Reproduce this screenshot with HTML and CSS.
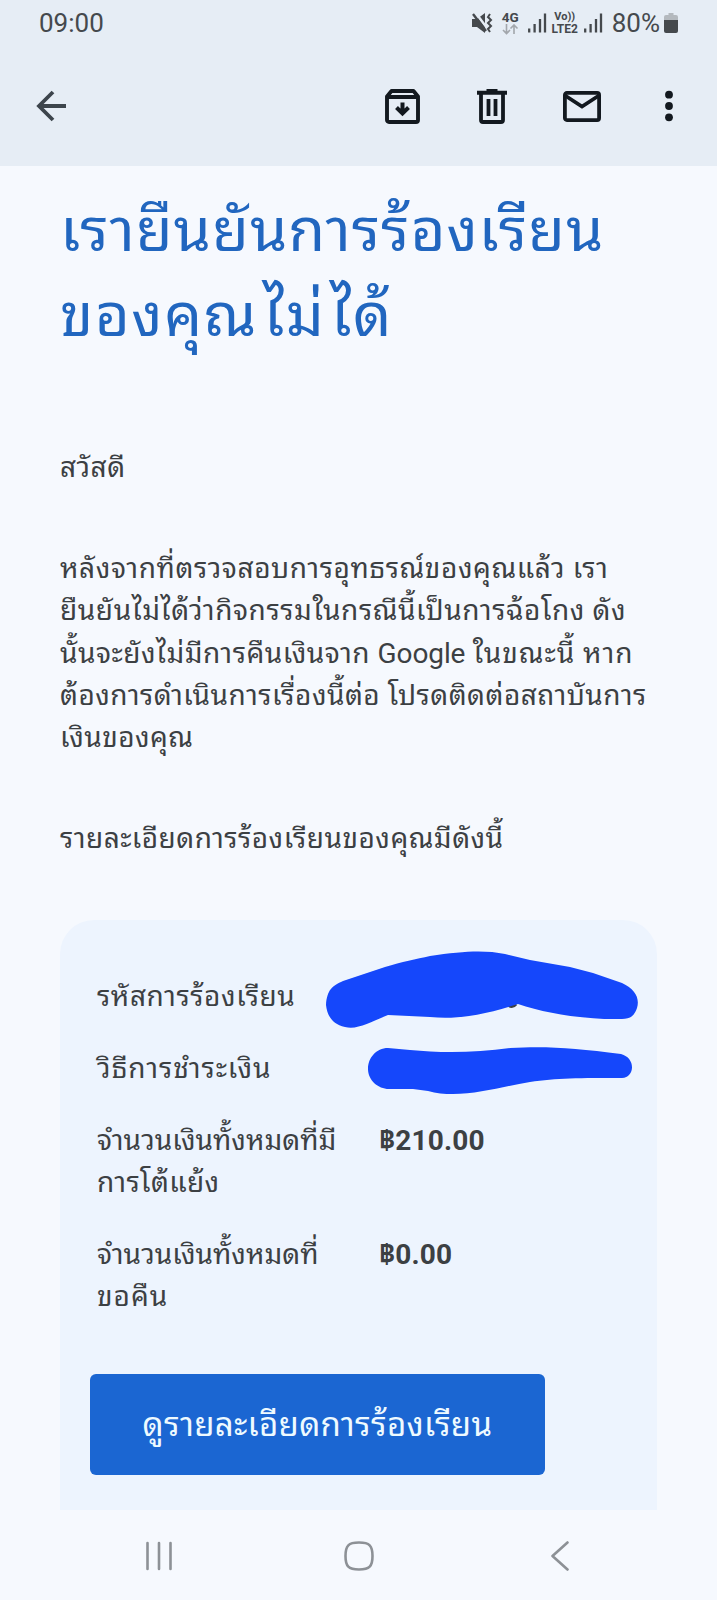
FILE: index.html
```html
<!DOCTYPE html>
<html lang="th">
<head>
<meta charset="utf-8">
<title>Gmail</title>
<link rel="stylesheet" href="styles.css">
</head>
<body>
<header class="top">
  <div class="status">
    <span class="clock">09:00</span>
    <div class="indicators">
      <svg class="mute" width="22" height="22" viewBox="0 0 22 22"><path d="M1 7h5l8-6v20l-8-6H1z" fill="#45494d"/><path d="M4 0l12 16" stroke="#e6edf5" stroke-width="2.500"/><path d="M2 2l13 17" stroke="#45494d" stroke-width="2.400"/><path d="M19 2l-2 3 3 3-3 3 3 3-3 3 2 3" fill="none" stroke="#45494d" stroke-width="2"/></svg>
      <div class="net"><span class="net-label">4G</span><svg width="17" height="11" viewBox="0 0 17 11"><path d="M4.500 0v9M1 6l3.500 3.500L8 6M12 10V1M8.500 4.500L12 1l3.500 3.500" fill="none" stroke="#a2a6ab" stroke-width="1.600"/></svg></div>
      <svg class="signal" width="20" height="20" viewBox="0 0 20 20"><path d="M2.200 15.500v4M7.600 11v8.500M13 6v13.500M18 .5v19" stroke="#45494d" stroke-width="2.300"/></svg>
      <div class="lte"><span class="vo">Vo))</span><span>LTE2</span></div>
      <svg class="signal" width="20" height="20" viewBox="0 0 20 20"><path d="M2.200 15.500v4M7.600 11v8.500M13 6v13.500M18 .5v19" stroke="#45494d" stroke-width="2.300"/></svg>
      <span class="percent">80%</span>
      <svg class="battery" width="14" height="22" viewBox="0 0 14 22"><path d="M4.500 1h5v2H12a2 2 0 0 1 2 2v4H0V5a2 2 0 0 1 2-2h2.500z" fill="#b4b9be"/><path d="M0 8h14v11a2 2 0 0 1-2 2H2a2 2 0 0 1-2-2z" fill="#45494d"/></svg>
    </div>
  </div>
  <div class="toolbar">
    <svg class="back" width="32" height="32" viewBox="0 0 32 32"><path d="M30 16H4M17 2L3 16l14 14" fill="none" stroke="#3d454c" stroke-width="3.800"/></svg>
    <div class="actions">
      <svg class="archive" width="35" height="35" viewBox="0 0 35 35"><path d="M2 7.500L6.500 2h22L33 7.500V31a2 2 0 0 1-2 2H4a2 2 0 0 1-2-2zM2 8h31" fill="none" stroke="#13191f" stroke-width="3.900" stroke-linejoin="round"/><path d="M17.500 13.500v11M11.500 18.500l6 6 6-6" fill="none" stroke="#13191f" stroke-width="4"/></svg>
      <svg class="trash" width="30" height="35" viewBox="0 0 30 35"><path d="M0 3.700h30M9.500 2h11" stroke="#13191f" stroke-width="4"/><path d="M4 4v27a2 2 0 0 0 2 2h18a2 2 0 0 0 2-2V4M11.500 10v17M18.500 10v17" fill="none" stroke="#13191f" stroke-width="3.800"/></svg>
      <svg class="unread" width="38" height="31" viewBox="0 0 38 31"><rect x="1.900" y="1.900" width="34.200" height="27.200" rx="2" fill="none" stroke="#13191f" stroke-width="3.800"/><path d="M2 4.500l17 11 17-11" fill="none" stroke="#13191f" stroke-width="3.800"/></svg>
      <svg class="more" width="8" height="32" viewBox="0 0 8 32" fill="#13191f"><circle cx="4" cy="4.700" r="3.900"/><circle cx="4" cy="16" r="3.900"/><circle cx="4" cy="27.300" r="3.900"/></svg>
    </div>
  </div>
</header>
<main class="mail">
  <h1 class="title"><span>เรายืนยันการร้องเรียน</span><span class="second">ของคุณ<b>ไม่</b><b>ได้</b></span></h1>
  <p class="para greeting"><span>สวัสดี</span></p>
  <p class="para"><span class="loose">หลังจากที่ตรวจสอบการอุทธรณ์ของคุณแล้ว เรา</span><span class="loose">ยืนยันไม่ได้ว่ากิจกรรมในกรณีนี้เป็นการฉ้อโกง ดัง</span><span>นั้นจะยังไม่มีการคืนเงินจาก <b class="latin">Google</b> <b class="after">ในขณะนี้ หาก</b></span><span>ต้องการดำเนินการเรื่องนี้ต่อ โปรดติดต่อสถาบันการ</span><span>เงินของคุณ</span></p>
  <p class="para"><span>รายละเอียดการร้องเรียนของคุณมีดังนี้</span></p>
  <section class="card">
    <dl class="details">
      <dt><span class="loose">รหัสการร้องเรียน</span></dt>
      <dd class="hidden"><svg class="scribble id" width="314" height="80" viewBox="326 948 314 80"><path d="M507 1003q5 5 9 0" fill="none" stroke="#3c4043" stroke-width="3"/><path d="M326 1004C327 989 332 985 343 980L385 966C402 961 416 958 430 955C463 950 485 949 505 953L530 959L570 966L593 972L622 982C635 988 640 997 637 1007C634 1016 629 1018 622 1018C589 1019 547 1013 518 1003C487 1013 459 1019 430 1016L388 1014C370 1021 358 1029 345 1026C331 1023 327 1013 326 1004Z" fill="#1547fb"/></svg></dd>
      <dt><span class="looser">วิธีการชำระเงิน</span></dt>
      <dd class="hidden"><svg class="scribble method" width="266" height="50" viewBox="367 1046 266 50"><path d="M368 1069C368 1058 376 1048 388 1048L410 1050C440 1053 475 1053 510 1048C547 1046 575 1048 621 1054C636 1058 635 1077 622 1078C580 1078 556 1078 530 1082C498 1087 461 1100 428 1091L413 1089L389 1089C378 1089 368 1080 368 1069Z" fill="#1547fb"/></svg></dd>
      <dt><span class="tight">จำนวนเงินทั้งหมดที่มี</span><span>การโต้แย้ง</span></dt>
      <dd>฿210.00</dd>
      <dt><span class="tight">จำนวนเงินทั้งหมดที่</span><span class="looser">ขอคืน</span></dt>
      <dd>฿0.00</dd>
    </dl>
    <a class="button"><span>ดูรายละเอียดการร้องเรียน</span></a>
  </section>
</main>
<nav class="navbar">
  <svg width="26" height="30" viewBox="0 0 26 30"><path d="M1.500 2v26M13 2v26M24.500 2v26" stroke="#8d9196" stroke-width="2.600" stroke-linecap="round"/></svg>
  <svg class="home" width="30" height="30" viewBox="0 0 30 30"><path d="M15 1.500C25.500 1.500 28.500 4.500 28.500 15S25.500 28.500 15 28.500 1.500 25.500 1.500 15 4.500 1.500 15 1.500z" fill="none" stroke="#8d9196" stroke-width="2.600"/></svg>
  <svg class="prev" width="18" height="30" viewBox="0 0 18 30"><path d="M16.500 1.500L1.500 15l15 13.500" fill="none" stroke="#8d9196" stroke-width="2.600" stroke-linecap="round" stroke-linejoin="round"/></svg>
</nav>
</body>
</html>
```
FILE: styles.css
```css
* { box-sizing: border-box; }
body { margin: 0; width: 717px; height: 1600px; overflow: hidden; background: #f6f9fe; color: #3c4043; font-family: Roboto, "Noto Sans Thai Looped", "Noto Sans Thai", "Noto Sans", sans-serif; display: flex; flex-direction: column; }
svg { display: block; flex: none; }
span { white-space: nowrap; }
b { font-weight: inherit; }
.top { height: 166px; flex: none; background: #e6edf5; }
.status { height: 46px; display: flex; justify-content: space-between; padding: 0 39px; color: #45494d; font-size: 26px; }
.clock { line-height: 46px; }
.indicators { display: flex; align-items: center; }
.net { display: flex; flex-direction: column; width: 18px; margin-left: 9px; }
.net-label { font-size: 13.500px; font-weight: 700; line-height: 13px; }
.signal { margin-left: 7px; }
.lte { display: flex; flex-direction: column; align-items: center; width: 28px; margin-left: 4px; font-size: 12px; line-height: 12px; font-weight: 700; }
.lte .vo { font-size: 11px; }
.lte + .signal { margin-left: 4px; }
.percent { font-size: 26px; margin-left: 9px; }
.battery { margin-left: 4px; }
.toolbar { height: 120px; display: flex; justify-content: space-between; align-items: center; padding: 0 44.500px 0 36px; }
.actions { display: flex; align-items: center; }
.trash { margin-left: 57.500px; }
.unread { margin-left: 56px; }
.more { margin-left: 63.500px; }
.mail { height: 1344px; flex: none; padding: 23px 60px 0; overflow: hidden; }
.title { margin: 0 0 89px; font-size: 60px; line-height: 84.500px; font-weight: 400; color: #2166bf; letter-spacing: 1px; }
.title .second { letter-spacing: 1.500px; }
.title b { margin-left: 5px; }
.title span, .para span, .details dt span { display: block; }
.para { margin: 0 0 59px; font-size: 28px; line-height: 42.200px; letter-spacing: .5px; }
.para:last-of-type { margin-bottom: 60px; }
.para .latin { letter-spacing: -.1px; }
.para .after { letter-spacing: 1px; }
.card { height: 620px; background: #edf4fe; border-radius: 34px 34px 0 0; padding: 56px 30px 0; }
.details { margin: 0; display: grid; grid-template-columns: 282px 1fr; row-gap: 29.500px; padding-left: 7px; font-size: 28px; line-height: 42.200px; }
.details dt { letter-spacing: .4px; }
.details dd { margin: 0; font-weight: 700; letter-spacing: .15px; }
.details .hidden { position: relative; }
.para .loose, .details .loose { letter-spacing: .6px; }
.details .looser { letter-spacing: 1px; }
.details .tight { letter-spacing: .05px; }
.scribble { position: absolute; }
.id { left: -53px; top: -27.500px; }
.method { left: -12px; top: -2px; }
.button { margin-top: 55.500px; width: 455px; height: 101px; padding-bottom: 6px; border-radius: 6px; background: #1b66d2; color: #eefaff; display: flex; align-items: center; justify-content: center; font-size: 33px; letter-spacing: .35px; }
.navbar { flex: 1; display: flex; padding: 31px 0 0 145.500px; }
.home { margin-left: 172.500px; }
.prev { margin-left: 177px; }
```
